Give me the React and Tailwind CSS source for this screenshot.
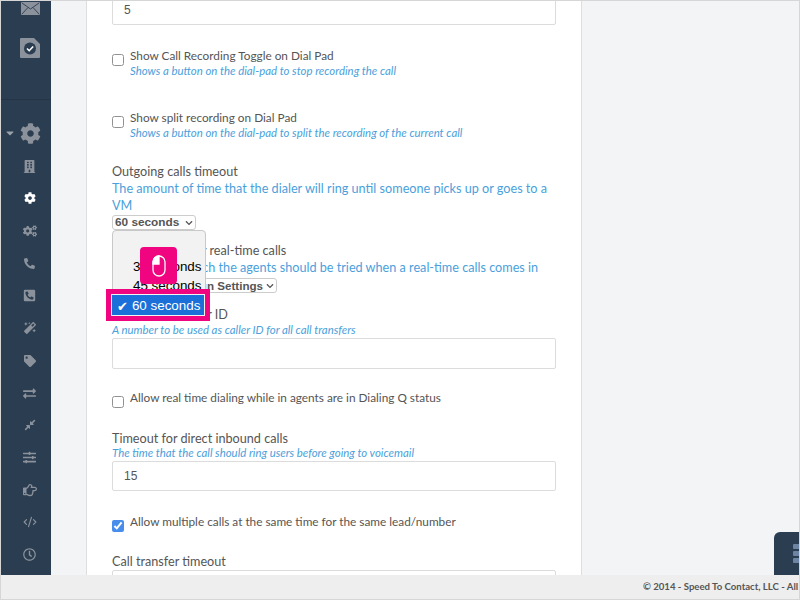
import React from 'react';
import {
  FaCog, FaBuilding, FaCogs, FaPhoneAlt, FaPhoneSquareAlt, FaMagic, FaTag, FaExchangeAlt,
  FaCompressAlt, FaSlidersH, FaRegHandPointRight, FaRegClock, FaCaretDown, FaChevronDown,
} from 'react-icons/fa';
import { CodeXml } from 'lucide-react';

const sideIcons = [
  { Icon: FaBuilding, size: 'text-[13px]', h: 'h-[32px]' },
  { Icon: FaCog, size: 'text-[12px] text-white', h: 'h-[32px]' },
  { Icon: FaCogs, size: 'text-[14px]', h: 'h-[33px]' },
  { Icon: FaPhoneAlt, size: 'text-[11px]', h: 'h-[32px]' },
  { Icon: FaPhoneSquareAlt, size: 'text-[13px]', h: 'h-[33px]' },
  { Icon: FaMagic, size: 'text-[12px]', h: 'h-[32px]' },
  { Icon: FaTag, size: 'text-[12px]', h: 'h-[33px]' },
  { Icon: FaExchangeAlt, size: 'text-[13px]', h: 'h-[32px]' },
  { Icon: FaCompressAlt, size: 'text-[12px]', h: 'h-[32px]' },
  { Icon: FaSlidersH, size: 'text-[13px]', h: 'h-[32px]' },
  { Icon: FaRegHandPointRight, size: 'text-[14px]', h: 'h-[33px]' },
  { Icon: CodeXml, size: 'w-[14px] h-[14px]', h: 'h-[32px]' },
  { Icon: FaRegClock, size: 'text-[13px]', h: 'h-[33px]' },
];

const Check = ({ label, hint, checked, className }) => (
  <div className={`flex items-start ${className}`}>
    <input type="checkbox" defaultChecked={checked} className="w-[12px] h-[12px] mt-[7px] mr-[6px] accent-[#1a73e8] opacity-80" />
    <div>
      <div className="text-[11.8px] leading-[17px] text-[#555]">{label}</div>
      {hint && <div className="text-[11.4px] leading-[14px] italic text-[#4a9fdc]">{hint}</div>}
    </div>
  </div>
);

export default function App() {
  return (
    <div className="relative w-[800px] h-[600px] overflow-hidden bg-[#f3f4f6] border border-[#d6d6d6] font-['Lato',sans-serif]">
      <div className="flex h-[574px]">
        <aside className="w-[50px] shrink-0 bg-[#2b3d50] text-[#8b929c] flex flex-col items-center">
          <div className="h-[99px] w-full border-b border-[#253545] flex flex-col items-center">
            <svg viewBox="0 0 19 13" className="w-[19px] h-[13px] mt-[1px] ml-[8px]">
              <rect width="19" height="13" rx="1" fill="#8b929c" />
              <path d="M1 1l8.5 6L18 1M1 12l6-6.500M18 12l-6-6.500" fill="none" stroke="#2b3d50" strokeWidth="0.9" />
            </svg>
            <svg viewBox="0 0 20 20" className="w-[20px] h-[20px] mt-[23px] ml-[8px]">
              <path d="M1 0h13l6 6v13a1 1 0 0 1-1 1H1a1 1 0 0 1-1-1V1a1 1 0 0 1 1-1z" fill="#8b929c" />
              <circle cx="10" cy="10.500" r="6" fill="#2b3d50" />
              <path d="M7 10.500l2.200 2.200L13.200 8.500" fill="none" stroke="#fff" strokeWidth="1.600" />
            </svg>
          </div>
          <div className="h-[34px] mt-[16px] w-full relative flex items-center justify-center">
            <FaCaretDown className="absolute left-[3px] top-[11px] text-[12px] text-[#9aa1aa]" />
            <FaCog className="text-[21px] ml-[8px]" />
          </div>
          <div className="flex flex-col items-center ml-[7px]">
            {sideIcons.map(({ Icon, size, h }, i) => (
              <div key={i} className={`${h} flex items-center justify-center`}>
                <Icon className={size} />
              </div>
            ))}
          </div>
        </aside>

        <div className="w-[35px] shrink-0" />

        <main className="w-[496px] shrink-0 bg-white border-x border-[#dedede] px-[25px] overflow-hidden">
          <div className="-mt-[6px] h-[30px] border border-[#dcdcdc] rounded-[2px] flex items-center px-[11px] font-['Liberation_Sans',sans-serif] text-[12px] text-[#555] w-[444px]">5</div>

          <Check className="mt-[22px]" label="Show Call Recording Toggle on Dial Pad" hint="Shows a button on the dial-pad to stop recording the call" />
          <Check className="mt-[31px]" label="Show split recording on Dial Pad" hint="Shows a button on the dial-pad to split the recording of the current call" />

          <div className="mt-[23px] text-[12.65px] leading-[17px] text-[#555]">Outgoing calls timeout</div>
          <div className="text-[12.65px] leading-[17px] text-[#4a9fdc] w-[444px]">The amount of time that the dialer will ring until someone picks up or goes to a VM</div>
          <div className="mt-px w-[84px] h-[15px] border border-[#ccc] rounded-[3px] bg-white flex items-center justify-between px-[2px] font-['Liberation_Sans',sans-serif] font-bold text-[11.8px] text-[#555]">
            <span>60 seconds</span>
            <FaChevronDown className="text-[8px]" />
          </div>

          <div className="mt-[12px] text-[12.65px] leading-[17px] text-[#555] whitespace-nowrap pl-[4px]">Dialing order for real-time calls</div>
          <div className="text-[12.65px] leading-[17px] text-[#4a9fdc] whitespace-nowrap">The order in which the agents should be tried when a real-time calls comes in</div>
          <div className="mt-[2px] w-[165px] h-[15px] border border-[#ccc] rounded-[3px] flex items-center justify-end gap-[3px] px-[2px] font-['Liberation_Sans',sans-serif] font-bold text-[11.6px] text-[#555] whitespace-nowrap">
            <span>Use Campaign Settings</span>
            <FaChevronDown className="text-[8px]" />
          </div>

          <div className="mt-[13px] text-[12.65px] leading-[17px] text-[#555]">Call transfer caller ID</div>
          <div className="text-[11.4px] leading-[14px] italic text-[#4a9fdc]">A number to be used as caller ID for all call transfers</div>
          <div className="mt-px h-[31px] w-[444px] border border-[#dcdcdc] rounded-[2px]" />

          <Check className="mt-[20px]" label="Allow real time dialing while in agents are in Dialing Q status" />

          <div className="mt-[22px] text-[12.65px] leading-[17px] text-[#555]">Timeout for direct inbound calls</div>
          <div className="text-[11.4px] leading-[12px] italic text-[#4a9fdc]">The time that the call should ring users before going to voicemail</div>
          <div className="mt-[2px] h-[30px] w-[444px] border border-[#dcdcdc] rounded-[2px] flex items-center px-[11px] font-['Liberation_Sans',sans-serif] text-[12px] text-[#555]">15</div>

          <Check className="mt-[22px]" checked label="Allow multiple calls at the same time for the same lead/number" />

          <div className="mt-[21px] text-[12.65px] leading-[17px] text-[#555]">Call transfer timeout</div>
          <div className="h-[30px] w-[444px] border border-[#dcdcdc] rounded-[2px]" />
        </main>
      </div>

      <footer className="h-[25px] bg-[#eeeeee] flex justify-end items-center overflow-hidden whitespace-nowrap">
        <div className="w-[156px] text-[9.6px] font-bold text-[#555] shrink-0">© 2014 - Speed To Contact, LLC - All Rights Reserved</div>
      </footer>

      {/* floating chat tab, bottom right */}
      <div className="absolute left-[773px] top-[531px] w-[30px] h-[43px] bg-[#2b3d50] rounded-tl-[6px] flex flex-col gap-[2px] pl-[19px] pt-[12px]">
        <div className="h-[5px] w-[10px] bg-[#6d85a3] rounded-[1px]" />
        <div className="h-[5px] w-[10px] bg-[#6d85a3] rounded-[1px]" />
        <div className="h-[5px] w-[10px] bg-[#6d85a3] rounded-[1px]" />
      </div>

      {/* native select popup */}
      <div className="absolute left-[111px] top-[229px] w-[94px] h-[80px] bg-[#f2f2f2] border border-[#c8c8c8] rounded-[4px] font-['Liberation_Sans',sans-serif] text-[13.4px] text-black">
        <div className="absolute left-[20px] top-[28px] leading-[16px] whitespace-nowrap">30 seconds</div>
        <div className="absolute left-[20px] top-[47px] leading-[16px] whitespace-nowrap">45 seconds</div>
      </div>
      <div className="absolute left-[105px] top-[288px] w-[104px] h-[32px] border-[5px] border-[#f0047f] bg-[#f2f2f2] p-[1px]">
        <div className="h-full bg-[#1a6fd8] text-white font-['Liberation_Sans',sans-serif] text-[13.4px] flex items-center pl-[5px] pt-[3px] whitespace-nowrap">
          <span className="font-['DejaVu_Sans',sans-serif] text-[13px] mr-[4px]">✔</span>60 seconds
        </div>
      </div>
      <div className="absolute left-[139px] top-[246px] w-[37px] h-[37px] rounded-[4px] bg-[#f0047f] flex items-center justify-center">
        <svg viewBox="0 0 14 22" className="w-[14px] h-[22px]" fill="none" stroke="#fff" strokeWidth="1.3">
          <rect x="1" y="1" width="12" height="20" rx="6" />
          <path d="M7 1v8H1V7a6 6 0 0 1 6-6z" fill="#fff" />
        </svg>
      </div>
    </div>
  );
}
